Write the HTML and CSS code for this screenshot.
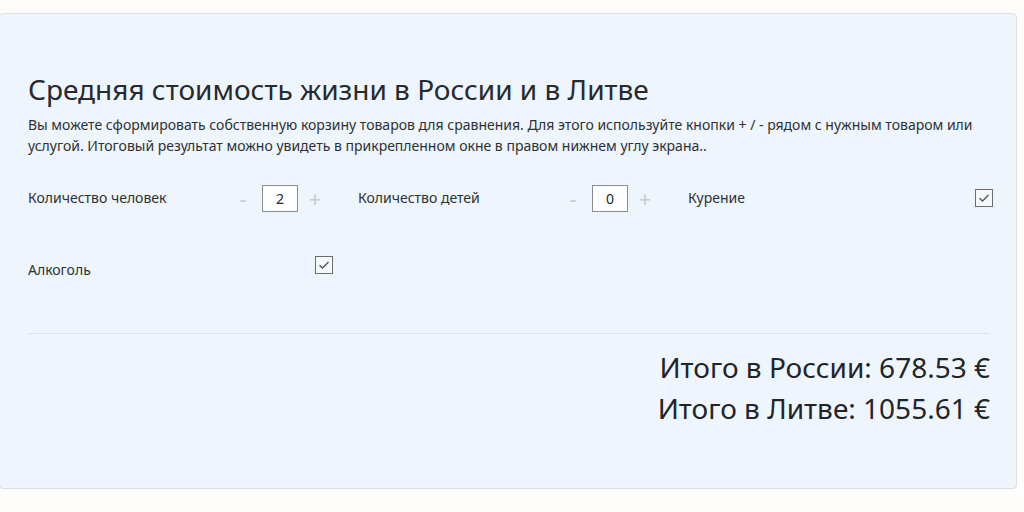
FILE: index.html
```html
<!DOCTYPE html>
<html lang="ru">
<head>
<meta charset="utf-8">
<link rel="stylesheet" href="styles.css">
</head>
<body>
<div class="card">
  <h1 class="title">Средняя стоимость жизни в России и в Литве</h1>
  <p class="desc">Вы можете сформировать собственную корзину товаров для сравнения. Для этого используйте кнопки + / - рядом с нужным товаром или услугой. Итоговый результат можно увидеть в прикрепленном окне в правом нижнем углу экрана..</p>
  <div class="grid">
    <div class="item">
      <span class="label">Количество человек</span>
      <div class="stepper"><span class="btn minus">-</span><span class="num">2</span><span class="btn plus">+</span></div>
    </div>
    <div class="item">
      <span class="label">Количество детей</span>
      <div class="stepper"><span class="btn minus">-</span><span class="num">0</span><span class="btn plus">+</span></div>
    </div>
    <div class="item">
      <span class="label">Курение</span>
      <span class="check"><svg viewBox="0 0 16 16" width="16" height="16"><path d="M3.5 8.2 L6.5 11 L12.5 5" fill="none" stroke="#555" stroke-width="1.4"/></svg></span>
    </div>
    <div class="item item-low">
      <span class="label">Алкоголь</span>
      <span class="check"><svg viewBox="0 0 16 16" width="16" height="16"><path d="M3.5 8.2 L6.5 11 L12.5 5" fill="none" stroke="#555" stroke-width="1.4"/></svg></span>
    </div>
  </div>
  <hr class="sep">
  <div class="totals">
    <div class="total">Итого в России: 678.53 €</div>
    <div class="total">Итого в Литве: 1055.61 €</div>
  </div>
</div>
</body>
</html>
```
FILE: styles.css
```css
html, body {
  margin: 0;
  padding: 0;
  background: #fffdfb;
}
body {
  font-family: "Noto Sans", "Open Sans", sans-serif;
  color: #212529;
}
.card {
  margin: 13px 0 0 -1px;
  width: 1018px;
  height: 476px;
  box-sizing: border-box;
  background: #eef5fc;
  border: 1px solid #dcdfe3;
  border-radius: 4px;
  padding: 57px 26px 0 28px;
}
.title {
  margin: 0;
  font-size: 28px;
  font-weight: 400;
  line-height: 36px;
  color: #262a2e;
}
.desc {
  margin: 7px 0 0;
  font-size: 14px;
  line-height: 21px;
  color: #2d3134;
}
.grid {
  margin-top: 27px;
  display: grid;
  grid-template-columns: repeat(3, 303px);
  column-gap: 27px;
  row-gap: 42px;
}
.item {
  display: flex;
  align-items: center;
  height: 30px;
}
.label {
  font-size: 14px;
  line-height: 20px;
  color: #2d3134;
  width: 204px;
  flex: none;
}
.stepper {
  display: flex;
  align-items: center;
}
.btn {
  width: 22px;
  text-align: center;
  font-size: 22px;
  color: #c9cdd1;
  line-height: 26px;
}
.minus { margin-right: 8px; }
.plus { margin-left: 6px; }
.num {
  width: 34px;
  height: 25px;
  border: 1px solid #8a8d90;
  background: #fff;
  font-size: 14px;
  text-align: center;
  line-height: 25px;
}
.check {
  margin-left: auto;
  margin-right: -2px;
  width: 16px;
  height: 16px;
  border: 1px solid #6a6d70;
  background: #f6f8fa;
  display: block;
}
.check svg { display: block; width: 16px; height: 16px; }
.item-low { align-items: flex-start; }
.item-low .label { margin-top: 5px; }
.item-low .check { margin-top: 1px; }
.sep {
  margin: 48px 0 0;
  border: 0;
  border-top: 1px solid #dde3ea;
}
.totals {
  margin-top: 13px;
  text-align: right;
}
.total {
  font-size: 28px;
  line-height: 41px;
  color: #212529;
}
```
